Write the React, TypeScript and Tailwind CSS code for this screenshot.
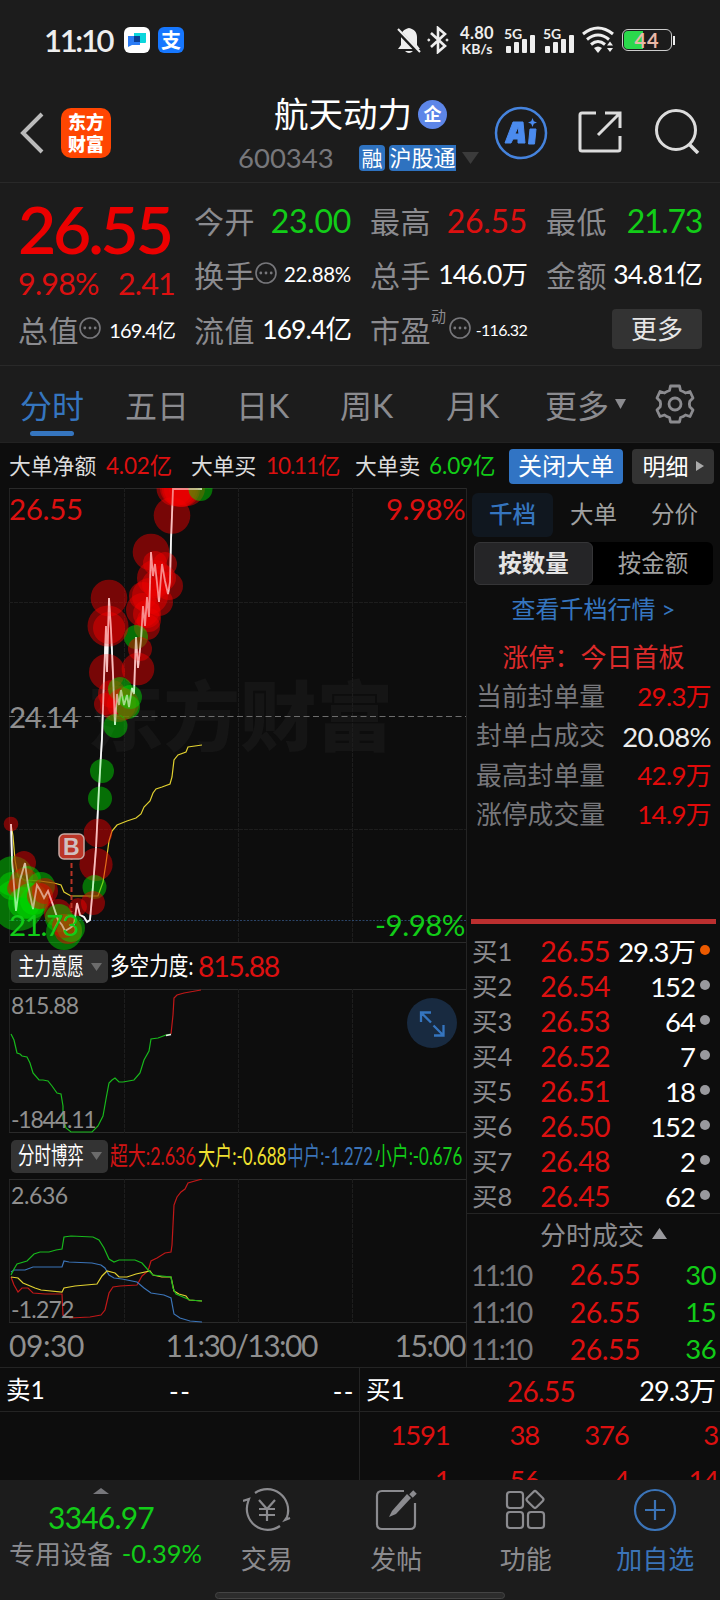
import type { ReactNode } from "react";

type Dot = [number, number, number, "r" | "g"];

const quoteTabs = [
  { label: "五日", width: "w-[111px]" },
  { label: "日K", width: "w-[104px]" },
  { label: "周K", width: "w-[106px]" },
  { label: "月K", width: "w-[105px]" },
];

const limitStats = [
  { label: "当前封单量", value: "29.3万", color: "text-[#e10a0a]" },
  { label: "封单占成交", value: "20.08%", color: "text-[#ececec] text-[27.500px]" },
  { label: "最高封单量", value: "42.9万", color: "text-[#e10a0a]" },
  { label: "涨停成交量", value: "14.9万", color: "text-[#e10a0a]" },
];

const bids = [
  ["买1", "26.55", "29.3万"],
  ["买2", "26.54", "152"],
  ["买3", "26.53", "64"],
  ["买4", "26.52", "7"],
  ["买5", "26.51", "18"],
  ["买6", "26.50", "152"],
  ["买7", "26.48", "2"],
  ["买8", "26.45", "62"],
];

const trades = [
  ["11:10", "26.55", "30"],
  ["11:10", "26.55", "15"],
  ["11:10", "26.55", "36"],
];

const queue = [
  ["1591", "38", "376", "3"],
  ["1", "56", "4", "14"],
];

// big order bubbles: x, y, radius, side
const bubbles: Dot[] = [
  [174.5, 0, 18, "r"],
  [178, 0, 18, "r"],
  [180, 1, 18, "r"],
  [182, 1, 18, "r"],
  [187, 0, 18, "r"],
  [200.5, 1, 12, "g"],
  [172, 27.5, 18.3, "r"],
  [151, 64, 18.3, "r"],
  [155, 75, 12, "r"],
  [165, 76, 12, "r"],
  [155, 90, 18, "r"],
  [163, 90, 13, "r"],
  [169, 98, 14, "r"],
  [156, 96, 14, "r"],
  [143, 108, 14, "r"],
  [150, 108, 18, "r"],
  [159, 114, 14, "r"],
  [143, 122, 17, "r"],
  [147, 126, 14, "r"],
  [149, 132, 12, "r"],
  [147, 139, 13, "r"],
  [136, 149, 12, "g"],
  [140, 161, 12, "r"],
  [138, 181, 16.3, "r"],
  [109, 110, 18.3, "r"],
  [108, 138, 20.5, "r"],
  [109, 140, 16, "r"],
  [107, 184, 18, "r"],
  [112, 206, 14, "r"],
  [105, 216, 11, "r"],
  [118, 216, 18, "r"],
  [120, 201, 12, "g"],
  [123, 216, 16, "r"],
  [130, 209, 12, "g"],
  [128, 219, 12, "g"],
  [115.5, 238, 12, "g"],
  [102, 283, 12, "g"],
  [100, 310.5, 12, "g"],
  [98, 345, 14.3, "r"],
  [96, 376.5, 16.6, "r"],
  [94.5, 399, 12, "g"],
  [93, 415, 12, "r"],
  [11, 336, 7.3, "r"],
  [13, 388, 20, "g"],
  [18, 417, 26, "g"],
  [12, 398, 14, "g"],
  [24, 375, 12, "r"],
  [17, 400, 10, "r"],
  [28, 391, 13, "g"],
  [24, 395, 15, "r"],
  [31, 413, 18, "g"],
  [24, 415, 16, "g"],
  [34, 413, 14, "g"],
  [41, 398, 14, "g"],
  [45, 403, 13, "r"],
  [40, 408, 13, "r"],
  [58, 425, 14, "r"],
  [59, 430, 14, "g"],
  [64, 444, 18, "g"],
  [68, 442, 14, "r"],
  [71, 440, 14, "g"],
  [64, 438, 12, "r"],
  [78, 419, 9, "r"],
];

const pricePath =
  "M11 336L12 372L16 423L20 392L25 375L28 397L33 421L37 397L40 402L44 410L48 403L53 417L58 432L62 437L65 443L70 440L74 437L77 415L80 427L84 429L87 434L90 432L93 398L96 360L99 300L102 250L104 190L106 138L107 184L109 110L111 142L113 186L115 237L117 206L119 217L121 202L124 217L127 207L129 219L132 200L134 206L136 149L138 180L141 152L143 118L145 138L147 109L149 129L151 64L153 88L155 76L159 114L162 76L165 93L168 106L170 94L171 52L172 27L173 1L202 1";

const avgPath =
  "M11 336L13 348L15 372L18 388L24 392L40 393L54 395L61 397L64 404L71 408L90 408L98 408L103 394L106 375L109 353L112 343L117 337L127 333L136 330L141 326L144 319L150 313L153 305L156 301L162 299L170 296L172 289L174 272L178 267L186 264L188 259L202 257";

function Grid({ height, rows = [] }: { height: number; rows?: number[] }) {
  return (
    <g stroke="#222" strokeWidth="1" fill="none">
      <path d={`M9.5 0V${height}M466.5 0V${height}`} />
      <path d={`M9 .5H466M9 ${height - 0.5}H466`} stroke="#2a2a2a" />
      <path d={`M124.5 0V${height}M238.5 0V${height}M352.5 0V${height}`} strokeDasharray="4 1" stroke="#1d1d1d" />
      {rows.map((y) => (
        <path key={y} d={`M9 ${y}.5H466`} strokeDasharray="4 1" stroke="#1d1d1d" />
      ))}
    </g>
  );
}

function More({ className = "" }: { className?: string }) {
  return (
    <svg className={`size-[22px] shrink-0 ${className}`} viewBox="0 0 22 22" fill="#77777b">
      <circle cx="11" cy="11" r="10" fill="none" stroke="#77777b" strokeWidth="1.6" />
      <circle cx="5.8" cy="11" r="1.4" />
      <circle cx="11" cy="11" r="1.4" />
      <circle cx="16.2" cy="11" r="1.4" />
    </svg>
  );
}

function Signal() {
  return (
    <div className="flex w-[31px] flex-col">
      <span className="h-[9px] pt-[2px] text-[14px] font-bold leading-[9px]">5G</span>
      <svg className="-mt-px h-[18px] w-[31px]" viewBox="0 0 31 18" fill="#eee">
        <rect x="2" y="11" width="5" height="7" rx="1" />
        <rect x="10" y="7" width="5" height="11" rx="1" />
        <rect x="18" y="4" width="5" height="14" rx="1" />
        <rect x="26" y="0" width="5" height="18" rx="1" />
      </svg>
    </div>
  );
}

function StatusBar() {
  return (
    <div className="flex h-20 items-center pl-[44px] pr-[43px] text-[#eee]">
      <span className="w-[80px] whitespace-nowrap text-[31px] font-semibold leading-none tracking-[-2.300px]">11:10</span>
      <svg className="size-[26px]" viewBox="0 0 26 26">
        <rect width="26" height="26" rx="6" fill="#fff" />
        <path d="M10 6h12v9q0 1-1 1H10z" fill="#0bd6dc" />
        <path d="M4 9h12v9H8l-4 2z" fill="#2b7cf5" />
        <path d="M10 9h6v6h-6z" fill="#0a3f96" />
      </svg>
      <div className="ml-2 flex size-[26px] items-center justify-center rounded-md bg-[#1677ff] text-[20px] font-bold leading-none text-white">
        支
      </div>
      <svg className="ml-[213px] h-[28px] w-[24px]" viewBox="0 0 24 28" fill="#eee">
        <path d="M4 19V11c0-5 3-8 8-9 5 1 8 4 8 9v8l3 4H1z" />
        <path d="M8 25h8q-4 4-8 0z" />
        <path d="M-1 3L22 27" stroke="#1c1c1c" strokeWidth="4" />
        <path d="M1 3L23 26" stroke="#eee" strokeWidth="2" />
      </svg>
      <svg className="ml-[6px] h-[28px] w-[22px]" viewBox="0 0 22 28" fill="none" stroke="#eee" strokeWidth="2.6">
        <path d="M4 7l14 13-7 6V2l7 6L4 21" />
        <circle cx="1.8" cy="14" r="1" fill="#eee" strokeWidth="1" />
        <circle cx="20" cy="14" r="1" fill="#eee" strokeWidth="1" />
      </svg>
      <div className="ml-[10px] flex w-[36px] flex-col items-center whitespace-nowrap font-bold">
        <span className="text-[16.500px] leading-[16px] tracking-[0.3px]">4.80</span>
        <span className="text-[14px] leading-[15px]">KB/s</span>
      </div>
      <div className="ml-[9px] flex gap-2">
        <Signal />
        <Signal />
      </div>
      <svg className="ml-2 h-[28px] w-[33px]" viewBox="0 0 33 28" fill="none" stroke="#eee" strokeWidth="3">
        <path d="M1 8q15-12 30 0M5 13.5q11-9 22 0M9 18.5q7-6 14 0" />
        <path d="M12 22q4-3 8 0l-4 5z" fill="#eee" stroke="none" />
        <path d="M25 19.500l3-4 3 4zM25 22l3 4 3-4z" fill="#eee" stroke="none" />
      </svg>
      <div className="ml-[7px] flex items-center">
        <div className="relative h-[22px] w-[50px] overflow-hidden rounded-md border border-[#ccc] p-px">
          <div className="h-full w-[19px] rounded-l bg-[#2bd94c]" />
          <span className="absolute inset-0 flex items-center justify-center text-[20px] font-bold leading-none tracking-[1px] text-[#e8b8a8]">
            44
          </span>
        </div>
        <div className="ml-px h-[9px] w-[2px] bg-[#eee]" />
      </div>
    </div>
  );
}

function Header() {
  return (
    <header className="flex h-[103px] border-b border-[#292929] pl-5">
      <svg className="mt-[32px] h-[42px] w-[24px]" viewBox="0 0 24 42" fill="none" stroke="#bbb" strokeWidth="4">
        <path d="M22 2L3 21l19 19" />
      </svg>
      <div className="ml-[17px] mt-[28px] flex size-[50px] flex-col items-center justify-center rounded-[10px] bg-[#ff4602] pb-px text-[18px] font-black leading-[22px] text-white">
        <span>东方</span>
        <span>财富</span>
      </div>
      <div className="ml-[124px] flex w-[250px] flex-col pt-[16px]">
        <div className="flex items-center pl-[39px]">
          <h1 className="text-[34.500px] leading-[36px] text-white">航天动力</h1>
          <span className="ml-[6px] flex size-[29px] items-center justify-center rounded-full bg-[#5d86e8] text-[18px] font-bold leading-none text-white">
            企
          </span>
        </div>
        <div className="mt-[12px] flex items-center pl-[3px]">
          <span className="w-[121px] text-[27.500px] leading-none text-[#77777b]">600343</span>
          <span className="flex h-[26px] w-[26px] items-center justify-center rounded-[4px] bg-[#2e72c0] text-[21px] leading-none text-white">
            融
          </span>
          <span className="ml-1 flex h-[26px] w-[67px] items-center justify-center whitespace-nowrap rounded-l-[4px] bg-[#2e72c0] text-[22px] leading-none text-white">
            沪股通
          </span>
          <svg className="ml-[6px] h-[12px] w-[17px]" viewBox="0 0 17 12">
            <path d="M0 0h17L8.500 12z" fill="#3b3b3b" />
          </svg>
        </div>
      </div>
      <svg className="ml-[9px] mt-[26px] size-[54px]" viewBox="0 0 54 54">
        <circle cx="27" cy="27" r="25" fill="none" stroke="#4583dd" strokeWidth="2.500" />
        <path
          fillRule="evenodd"
          strokeLinejoin="round"
          stroke="#4b8bee"
          fill="#4b8bee"
          d="M19 16h10l2 21h-7v-4h-5l-2 4h-6zM24 21l-3 7h4z"
        />
        <path d="M36 23h6l-1.500 15h-6z" fill="#4b8bee" stroke="#4b8bee" strokeLinejoin="round" />
        <path d="M38.500 12l1.300 3.200 3.200 1.300-3.200 1.300-1.300 3.200-1.300-3.200-3.200-1.300 3.200-1.300z" fill="#4b8bee" />
      </svg>
      <svg className="ml-[29px] mt-[30px] size-[45px]" viewBox="0 0 45 45" fill="none" stroke="#dcdcdc" strokeWidth="3">
        <path d="M19 3H5q-2 0-2 2v34q0 2 2 2h36q2 0 2-2V26" />
        <path d="M28 3h15v15M42 4L21 25" />
      </svg>
      <svg className="ml-[32px] mt-[28px] size-[46px]" viewBox="0 0 46 46" fill="none" stroke="#dcdcdc" strokeWidth="3">
        <circle cx="22" cy="22" r="19.500" />
        <path d="M35 36l9 9" strokeWidth="3.500" />
      </svg>
    </header>
  );
}

function Cell({ label, children }: { label: string; children: ReactNode }) {
  return (
    <div className="flex items-center justify-between whitespace-nowrap">
      <span className="text-[30px] tracking-[0.5px] text-[#8b8b8f]">{label}</span>
      {children}
    </div>
  );
}

function Quote() {
  return (
    <section className="flex h-[183px] border-b border-[#292929] pl-[18px] pt-[11px] leading-none">
      <div className="flex w-[157px] flex-col">
        <div className="h-[70px] whitespace-nowrap text-[66px] font-semibold leading-[70px] tracking-[-3.200px] text-[#eb0000]">
          26.55
        </div>
        <div className="flex h-[42px] items-center justify-between whitespace-nowrap pb-[3px] text-[30.500px] tracking-[-0.8px] text-[#dc1010]">
          <span>9.98%</span>
          <span>2.41</span>
        </div>
        <div className="flex h-[42px] items-center whitespace-nowrap pt-[6px]">
          <span className="text-[30px] tracking-[0.5px] text-[#8b8b8f]">总值</span>
          <More className="-mt-1" />
          <span className="ml-auto text-[20px] tracking-[-0.9px] text-white">169.4亿</span>
        </div>
      </div>
      <div className="ml-[19px] grid w-[509px] grid-cols-[157px_157px_156px] grid-rows-[53px_55px_55px] gap-x-[19px]">
        <Cell label="今开">
          <span className="text-[32px] tracking-[-0.3px] text-[#12cc18]">23.00</span>
        </Cell>
        <Cell label="最高">
          <span className="text-[32px] tracking-[-0.3px] text-[#dc1010]">26.55</span>
        </Cell>
        <Cell label="最低">
          <span className="text-[32px] tracking-[-1.300px] text-[#12cc18]">21.73</span>
        </Cell>
        <div className="flex items-center whitespace-nowrap">
          <span className="text-[30px] tracking-[0.5px] text-[#8b8b8f]">换手</span>
          <More className="-mt-1" />
          <span className="ml-auto text-[20.500px] tracking-[-0.3px] text-white">22.88%</span>
        </div>
        <Cell label="总手">
          <span className="text-[26.500px] tracking-[-0.9px] text-white">146.0万</span>
        </Cell>
        <Cell label="金额">
          <span className="text-[26.500px] tracking-[-0.9px] text-white">34.81亿</span>
        </Cell>
        <Cell label="流值">
          <span className="text-[26.500px] tracking-[-0.9px] text-white">169.4亿</span>
        </Cell>
        <div className="flex items-center whitespace-nowrap">
          <span className="text-[30px] tracking-[0.5px] text-[#8b8b8f]">市盈</span>
          <span className="mb-[26px] text-[15px] text-[#8b8b8f]">动</span>
          <More className="-mt-1 ml-[3px]" />
          <span className="ml-auto text-[16px] tracking-[-0.7px] text-white">-116.32</span>
        </div>
        <button className="ml-auto mt-[7px] flex h-[40px] w-[90px] items-center justify-center rounded-[4px] bg-[#333] text-[26px] text-[#e6e6e6]">
          更多
        </button>
      </div>
    </section>
  );
}

function PeriodTabs() {
  return (
    <nav className="flex h-[77px] items-center border-b border-[#222] pl-5 pt-[3px] text-[32px] leading-none text-[#8b8b8f]">
      <div className="relative w-[105px] text-[#3575bf]">
        分时
        <span className="absolute -bottom-[14px] left-[10px] h-[5px] w-[44px] rounded-full bg-[#3575bf]" />
      </div>
      {quoteTabs.map((tab) => (
        <span key={tab.label} className={tab.width}>
          {tab.label}
        </span>
      ))}
      <span className="-ml-[6px] flex w-[110px] items-center">
        更多
        <svg className="mb-1 ml-[6px] h-[10px] w-[11px]" viewBox="0 0 11 10">
          <path d="M0 0h11L5.500 10z" fill="#8b8b8f" />
        </svg>
      </span>
      <svg className="-mt-[3px] size-[40px]" viewBox="-20 -20 40 40" fill="none" stroke="#8b8b8f" strokeWidth="2.800">
        <path
          strokeLinejoin="round"
          d="M-4.500-18h9l1 4.500q3 .8 5 2.500l4.500-1.500 3 6.500-3.200 3.200q-.8 2.800 0 5.600L18 6l-3 6.500-4.500-1.500q-2 1.700-5 2.500l-1 4.500h-9l-1-4.500q-3-.8-5-2.500l-4.500 1.500L-18 6l3.200-3.200q.8-2.800 0-5.600L-18-6l3-6.500 4.500 1.500q2-1.700 5-2.500z"
        />
        <circle r="6" />
      </svg>
    </nav>
  );
}

function BigOrders() {
  return (
    <div className="flex h-[45px] items-center whitespace-nowrap pl-[9px] pt-px text-[21.800px] leading-none text-[#dcdcdc]">
      <span className="w-[97px]">大单净额</span>
      <span className="w-[85px] text-[22.500px] tracking-[-0.2px] text-[#dc1010]">4.02亿</span>
      <span className="w-[75px]">大单买</span>
      <span className="w-[89px] text-[22.500px] tracking-[-1.100px] text-[#dc1010]">10.11亿</span>
      <span className="w-[74px]">大单卖</span>
      <span className="w-[80px] text-[22.500px] tracking-[-0.1px] text-[#12cc18]">6.09亿</span>
      <button className="flex h-[35px] w-[114px] items-center justify-center rounded-[4px] bg-[#3174c4] text-[24px] text-white">
        关闭大单
      </button>
      <button className="ml-[9px] flex h-[35px] w-[82px] items-center justify-center gap-[7px] rounded-[4px] bg-[#333] text-[23px] text-white">
        明细
        <svg className="h-[10px] w-[8px]" viewBox="0 0 8 10">
          <path d="M0 0l8 5-8 5z" fill="#aaa" />
        </svg>
      </button>
    </div>
  );
}

function PriceChart() {
  return (
    <div className="relative h-[455px] text-[29.500px] leading-none">
      <svg className="absolute inset-0 h-[463px] w-[466px]" viewBox="0 0 466 463">
        <text x="87" y="257" fontSize="76.500" fontWeight="900" fill="#151515">
          东方财富
        </text>
        <Grid height={455} rows={[114, 341]} />
        <path d="M9 228.500H466" stroke="#6c6c6c" strokeDasharray="6 3.500" />
        <path d="M9 432.500H466" stroke="#2b4468" strokeDasharray="2 1.500" />
        <path d={avgPath} fill="none" stroke="#e0d030" strokeWidth="1.200" />
        <path d={pricePath} fill="none" stroke="#eee" strokeWidth="1.800" />
        {bubbles.map(([x, y, r, side], i) => (
          <circle key={i} cx={x} cy={y} r={r} fill={side === "r" ? "#f00000" : "#00e000"} opacity="0.47" />
        ))}
        <path d={pricePath} fill="none" stroke="#fff" strokeWidth="1.800" opacity="0.5" />
        <path d="M71.500 359V424" stroke="#b83426" strokeWidth="2" strokeDasharray="5 3" />
        <rect x="59" y="346" width="25" height="25" rx="5" fill="#bb3527" stroke="#c9a9a4" strokeWidth="1.500" />
        <text x="63" y="367" fontSize="23" fontWeight="700" fontFamily="Liberation Sans, sans-serif" fill="#d0c0c0">
          B
        </text>
      </svg>
      <span className="absolute left-[9px] top-[6px] tracking-[-0.3px] text-[#dc1010]">26.55</span>
      <span className="absolute right-px top-[6px] tracking-[-0.6px] text-[#dc1010]">9.98%</span>
      <span className="absolute left-[9px] top-[214px] tracking-[-1.400px] text-[#8f8f8f]">24.14</span>
      <span className="absolute left-[9px] top-[422px] tracking-[-1.300px] text-[#12cc18]">21.73</span>
      <span className="absolute right-px top-[422px] tracking-[-0.5px] text-[#12cc18]">-9.98%</span>
    </div>
  );
}

function IndicatorSelect({ label }: { label: string }) {
  return (
    <div className="relative flex h-[33px] w-[97px] shrink-0 items-center rounded-[5px] bg-[#333] pl-[7px]">
      <span className="inline-block w-[65px] origin-left scale-x-[0.7] whitespace-nowrap text-[23.500px] text-white">{label}</span>
      <svg className="ml-[8px] h-[8px] w-[11px]" viewBox="0 0 11 8">
        <path d="M0 0h11L5.500 8z" fill="#6c6c6c" />
      </svg>
    </div>
  );
}

function ForceChart() {
  return (
    <>
      <div className="flex h-[46px] items-center whitespace-nowrap pl-[11px] pt-px leading-none">
        <IndicatorSelect label="主力意愿" />
        <span className="ml-[2px] w-[88px] origin-left scale-x-[0.8] text-[24.500px] text-white">多空力度:</span>
        <span className="text-[28.500px] tracking-[-1.400px] text-[#dc1010]">815.88</span>
      </div>
      <div className="relative h-[143px] text-[23px] leading-none text-[#8f8f8f]">
        <svg className="absolute inset-0 h-[145px] w-[466px]" viewBox="0 0 466 145" fill="none" strokeWidth="1.200">
          <Grid height={144} />
          <path
            stroke="#18b81c"
            d="M11 45L14 51L17 64L20 65L22 67L27 68L30 74L33 84L39 91L43 91L48 92L52 97L57 104L61 105L63 117L63 130L66 139L71 143L92 143L98 137L103 127L106 110L109 94L112 91L115 89L119 93L123 93L134 91L140 84L144 71L149 62L151 50L158 49L166 46L171 45"
          />
          <path stroke="#c01818" d="M171 45L173 26L174 9L177 6L184 4L201 1" />
          <path stroke="#eee" strokeWidth="1.600" d="M166 46.500L171 45.500" />
        </svg>
        <span className="absolute left-[11px] top-[5px] tracking-[-0.8px]">815.88</span>
        <span className="absolute left-[11px] top-[119px] tracking-[-1.200px]">-1844.11</span>
        <svg className="absolute left-[407px] top-[9px] size-[50px]" viewBox="0 0 50 50" fill="none" stroke="#3575bf" strokeWidth="2.300">
          <circle cx="25" cy="25" r="25" fill="#182a40" stroke="none" />
          <path d="M24 14.500H14V24M15 15.500l9 9M27 37.500h9.500V27M35.500 36.500l-9-9" />
        </svg>
      </div>
    </>
  );
}

function GameChart() {
  return (
    <>
      <div className="flex h-[47px] items-center whitespace-nowrap pl-[11px] pt-px leading-none">
        <IndicatorSelect label="分时博弈" />
        <div className="ml-[2px] flex w-[354px] text-[25.500px]">
          <span className="w-[88px] origin-left scale-x-[0.7] text-[#d01414]">超大:2.636</span>
          <span className="w-[89px] origin-left scale-x-[0.67] text-[#f0e030]">大户:-0.688</span>
          <span className="w-[88px] origin-left scale-x-[0.65] text-[#3b74b8]">中户:-1.272</span>
          <span className="w-[88px] origin-left scale-x-[0.66] text-[#12cc18]">小户:-0.676</span>
        </div>
      </div>
      <div className="relative h-[143px] text-[23px] leading-none text-[#8f8f8f]">
        <svg className="absolute inset-0 h-[144px] w-[466px]" viewBox="0 0 466 144" fill="none" strokeWidth="1.200">
          <Grid height={144} />
          <path
            stroke="#c01818"
            d="M11 98L14 106L18 113L22 109L28 109L33 114L45 115L62 115L63 136L70 139L90 138L101 136L105 131L109 114L113 108L120 107L137 106L142 97L148 92L151 82L157 79L165 74L171 73L172 66L174 26L177 18L181 13L185 10L188 4L202 0"
          />
          <path
            stroke="#3b74b8"
            d="M11 93L14 91L25 91L33 88L62 88L64 82L69 83L92 84L101 86L105 89L109 96L114 99L122 100L137 103L144 109L151 114L164 116L171 119L174 135L180 139L190 142L202 143"
          />
          <path
            stroke="#e0d030"
            d="M11 98L18 99L23 104L35 109L41 111L62 113L64 109L75 107L97 105L102 97L107 92L115 94L119 98L127 98L136 95L150 92L153 96L162 98L171 98L174 112L179 115L186 117L189 121L202 122"
          />
          <path
            stroke="#18b81c"
            d="M11 96L14 90L17 85L27 82L34 75L40 73L49 73L56 71L62 70L64 58L71 57L93 58L99 61L104 69L109 80L114 83L119 81L135 81L142 84L149 92L153 96L162 97L171 98L173 109L176 115L183 118L190 121L202 122"
          />
        </svg>
        <span className="absolute left-[11px] top-[5px] tracking-[-0.4px]">2.636</span>
        <span className="absolute left-[11px] top-[119px] tracking-[-0.8px]">-1.272</span>
      </div>
      <div className="flex h-[45px] items-center justify-between pl-[9px] pr-px text-[30px] leading-none text-[#8f8f8f]">
        <span className="tracking-[-0.4px]">09:30</span>
        <span className="ml-[4px] tracking-[-1.500px]">11:30/13:00</span>
        <span className="tracking-[-1.300px]">15:00</span>
      </div>
    </>
  );
}

function OrderBook() {
  return (
    <aside className="flex w-[254px] flex-col border-l border-[#242424] leading-none">
      <div className="mt-[5px] flex h-[44px] shrink-0 pl-[5px] text-[23.500px] text-[#a0a0a0]">
        <span className="flex w-[81px] items-center justify-center rounded-[6px] bg-[#10171f] font-medium text-[#3575bf]">千档</span>
        <span className="flex w-[81px] items-center justify-center">大单</span>
        <span className="flex w-[81px] items-center justify-center">分价</span>
      </div>
      <div className="ml-[7px] mt-[5px] flex h-[43px] w-[239px] shrink-0 rounded-[6px] bg-black text-[23.500px] text-[#a0a0a0]">
        <span className="flex w-[119px] items-center justify-center rounded-[6px] border border-[#353537] bg-[#252527] font-bold text-[#e4e4e4]">
          按数量
        </span>
        <span className="flex w-[120px] items-center justify-center">按金额</span>
      </div>
      <div className="mt-[12px] h-[24px] shrink-0 text-center text-[24px] text-[#3575bf]">查看千档行情 &gt;</div>
      <div className="mt-[23px] h-[27px] shrink-0 text-center text-[26px] text-[#dc2a2a]">涨停：今日首板</div>
      <div className="mt-[6px] h-[158px] shrink-0 pl-[9px] pr-[9px]">
        {limitStats.map((s) => (
          <div key={s.label} className="flex h-[39.500px] items-center justify-between whitespace-nowrap text-[25.800px] text-[#77777b]">
            <span>{s.label}</span>
            <span className={`tracking-[-0.6px] ${s.color}`}>{s.value}</span>
          </div>
        ))}
      </div>
      <div className="ml-[4px] mt-[84px] h-[5px] w-[245px] shrink-0 bg-[#bb2f2f]" />
      <div className="mt-[10px] h-[280px] shrink-0 border-b border-[#242424] pl-[5px]">
        {bids.map(([name, price, amount], i) => (
          <div key={name} className="flex h-[35px] items-center whitespace-nowrap">
            <span className="w-[50px] text-[25.500px] text-[#8b8b8f]">{name}</span>
            <span className="w-[88px] text-right text-[28.500px] tracking-[-0.6px] text-[#dc1010]">{price}</span>
            <span className="w-[85px] text-right text-[27.500px] tracking-[-1px] text-white">{amount}</span>
            <span className={`mb-1 ml-[5px] size-[10px] rounded-full ${i === 0 ? "bg-[#ec5a00]" : "bg-[#99999d]"}`} />
          </div>
        ))}
      </div>
      <div className="flex h-[42px] shrink-0 items-center justify-center gap-[8px] pl-[20px] text-[26px] text-[#8b8b8f]">
        分时成交
        <svg className="mb-[3px] h-[11px] w-[15px]" viewBox="0 0 15 11">
          <path d="M7.500 0L15 11H0z" fill="#99999d" />
        </svg>
      </div>
      <div className="shrink-0 pl-[4px] pr-[4px]">
        {trades.map(([time, price, amount], i) => (
          <div key={i} className="flex h-[37.300px] items-center">
            <span className="w-[81px] text-[28px] tracking-[-2.400px] text-[#77777b]">{time}</span>
            <span className="w-[88px] text-right text-[28.500px] tracking-[-0.5px] text-[#dc1010]">{price}</span>
            <span className="ml-auto text-[27.500px] tracking-[-0.6px] text-[#12cc18]">{amount}</span>
          </div>
        ))}
      </div>
    </aside>
  );
}

function Depth() {
  return (
    <section className="flex h-[113px] overflow-hidden border-t border-[#242424] text-[26px] leading-none">
      <div className="flex w-[360px] flex-col border-r border-[#242424]">
        <div className="flex h-[44px] items-center border-b border-[#242424] pl-[6px] pr-[4px] pt-[2px] text-white">
          <span className="w-[163px] text-[24.500px]">卖1</span>
          <span className="tracking-[1.500px]">--</span>
          <span className="ml-auto tracking-[1.500px]">--</span>
        </div>
      </div>
      <div className="flex w-[360px] flex-col">
        <div className="flex h-[44px] shrink-0 items-center border-b border-[#242424] pl-[6px] pr-[5px] pt-[2px] text-white">
          <span className="w-[141px] text-[24.500px]">买1</span>
          <span className="text-[28px] tracking-[-0.7px] text-[#dc1010]">26.55</span>
          <span className="ml-auto text-[27px] tracking-[-0.9px]">29.3万</span>
        </div>
        {queue.map((row, i) => (
          <div key={i} className="grid h-[45px] shrink-0 grid-cols-4 items-center pr-[2px] text-right text-[27.500px] tracking-[-1.200px] text-[#dc1010]">
            {row.map((n, j) => (
              <span key={j}>{n}</span>
            ))}
          </div>
        ))}
      </div>
    </section>
  );
}

function NavItem({ label, active, children }: { label: string; active?: boolean; children: ReactNode }) {
  return (
    <div className={`flex w-[129.500px] flex-col items-center pt-[6px] ${active ? "text-[#3b74b8]" : "text-[#8b8b8f]"}`}>
      <svg className="size-[48px]" viewBox="-24 -24 48 48" fill="none" stroke="currentColor" strokeWidth="2.200">
        {children}
      </svg>
      <span className="mt-[12px] text-[26px]">{label}</span>
    </div>
  );
}

function BottomBar() {
  return (
    <footer className="relative flex h-[120px] bg-[#1c1c1c] leading-none">
      <div className="flex w-[202px] shrink-0 flex-col items-center whitespace-nowrap pt-[8px]">
        <svg className="h-[6px] w-[16px]" viewBox="0 0 16 6">
          <path d="M8 0l8 6H0z" fill="#77777b" />
        </svg>
        <span className="mt-[8px] text-[30px] tracking-[-0.8px] text-[#12cc18]">3346.97</span>
        <div className="mt-[9px] flex w-full items-center pl-[9px] text-[26px] text-[#8b8b8f]">
          专用设备
          <span className="ml-auto text-[25.500px] text-[#12cc18]">-0.39%</span>
        </div>
      </div>
      <NavItem label="交易">
        <path d="M-12-17A21 21 0 0 1 20 7l-2 3 5-2" />
        <path d="M13 16A21 21 0 0 1-19-8l1-3-6 2" />
        <path d="M-8-10l8 9 8-9M0-1V11M-8-1H8M-8 5H8" />
      </NavItem>
      <NavItem label="发帖">
        <path d="M8-19h-22q-5 0-5 5v28q0 5 5 5h28q5 0 5-5V-7" />
        <path d="M-7 7l3-6L11-16l4 4L0 4z" fill="currentColor" stroke="none" />
        <path d="M15-14l4-4" strokeWidth="5" />
      </NavItem>
      <NavItem label="功能">
        <rect x="-19" y="-18" width="16" height="16" rx="3" />
        <rect x="-19" y="2" width="16" height="16" rx="3" />
        <rect x="2" y="2" width="16" height="16" rx="3" />
        <rect x="2.500" y="-17" width="13" height="13" rx="2" transform="rotate(45 9 -10.500)" />
      </NavItem>
      <NavItem label="加自选" active>
        <circle r="20" />
        <path d="M-10 0H10M0-10V10" />
      </NavItem>
      <div className="absolute bottom-px left-[215px] h-[7px] w-[290px] rounded-full border border-[#444] bg-[#2c2c2c]" />
    </footer>
  );
}

export default function App() {
  return (
    <div className="flex h-[1600px] w-[720px] flex-col overflow-hidden bg-[#0d0d0d] font-['Lato','Noto_Sans_CJK_SC',sans-serif]">
      <div className="bg-[#1c1c1c]">
        <StatusBar />
        <Header />
        <Quote />
        <PeriodTabs />
      </div>
      <BigOrders />
      <main className="flex h-[879px]">
        <div className="w-[466px] shrink-0">
          <PriceChart />
          <ForceChart />
          <GameChart />
        </div>
        <OrderBook />
      </main>
      <Depth />
      <BottomBar />
    </div>
  );
}
